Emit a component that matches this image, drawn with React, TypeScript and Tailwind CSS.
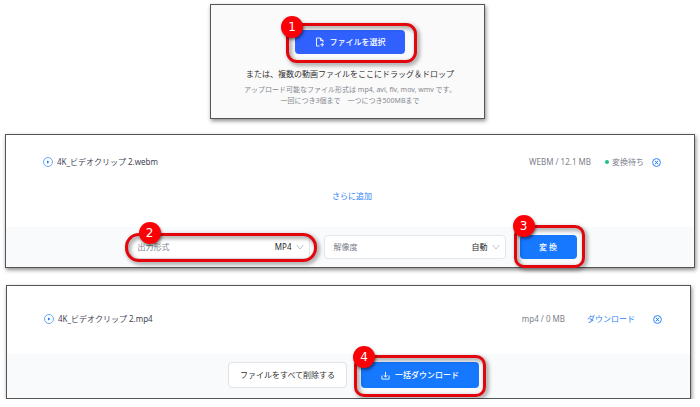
import { useState } from "react";
import type { ReactNode } from "react";

const PANEL =
    "flex flex-col border border-[#555555] shadow-[1px_2px_4px_rgba(0,0,0,0.45)]";
const PRIMARY =
    "flex items-center justify-center rounded-[4px] font-medium text-white";

type StepProps = {
    step: number;
    ring: string;
    badge: string;
    className?: string;
    children: ReactNode;
};

// Red outline with a numbered badge, laid over the control it points at
function Step({ step, ring, badge, className = "", children }: StepProps) {
    return (
        <div className={`relative flex ${className}`}>
            {children}
            <span
                className={`pointer-events-none absolute border-[3px] border-[#e3060c] drop-shadow-[2px_2px_2px_rgba(0,0,0,0.5)] ${ring}`}
            />
            <span
                className={`pointer-events-none absolute flex size-[22px] items-center justify-center rounded-full bg-[#fb0007] font-[Verdana,'DejaVu_Sans',sans-serif] text-[12px] leading-none text-white shadow-[1px_2px_3px_rgba(0,0,0,0.5)] ${badge}`}
            >
                {step}
            </span>
        </div>
    );
}

function PlayIcon() {
    return (
        <svg viewBox="0 0 20 20" className="size-[10px] shrink-0" fill="none" aria-hidden="true">
            <circle cx="10" cy="10" r="9" stroke="#4596f7" strokeWidth="1.6" />
            <path d="M8 6.8 13 10l-5 3.2z" fill="#1677ff" />
        </svg>
    );
}

function CloseIcon() {
    return (
        <svg viewBox="0 0 20 20" className="size-[9px]" fill="none" stroke="#1677ff" aria-hidden="true">
            <circle cx="10" cy="10" r="8.7" strokeWidth="2" />
            <path d="m6.8 6.3 6.4 7.4M13.2 6.3l-6.4 7.4" strokeWidth="2.2" />
        </svg>
    );
}

function FileAddIcon() {
    return (
        <svg viewBox="0 0 20 20" className="size-[10px]" fill="none" stroke="currentColor" strokeWidth="1.8" aria-hidden="true">
            <path d="M9 18H3V2h8l5 5v4" />
            <path d="M11 2v5h5M14.500 12v7M11 15.500h7" />
        </svg>
    );
}

function DownloadIcon() {
    return (
        <svg viewBox="0 0 20 20" className="size-[9px]" fill="none" stroke="currentColor" strokeWidth="2" aria-hidden="true">
            <path d="M2 10v8h16v-8" />
            <path d="M10 2v11M6 9.500l4 4 4-4" />
        </svg>
    );
}

type FieldProps = {
    id: string;
    label: string;
    options: string[];
};

function SelectField({ id, label, options }: FieldProps) {
    const [value, setValue] = useState(options[0]);

    return (
        <div className="flex h-6 w-full items-center rounded-[4px] border border-[#e4e6ea] bg-white pr-[5px] pl-[9px]">
            <label htmlFor={id} className="text-[#7b808a]">
                {label}
            </label>
            <select
                id={id}
                value={value}
                onChange={(e) => setValue(e.target.value)}
                className="min-w-0 flex-1 appearance-none bg-transparent pr-1 text-[#26282c] outline-none [text-align-last:right]"
            >
                {options.map((option) => (
                    <option key={option}>{option}</option>
                ))}
            </select>
            <svg viewBox="0 0 12 12" className="size-2" fill="none" stroke="#b5b8be" strokeWidth="1.3" aria-hidden="true">
                <path d="m1 3 5 6 5-6" />
            </svg>
        </div>
    );
}

export default function App() {
    return (
        <main className="flex flex-col bg-white pt-1 font-['Noto_Sans','Noto_Sans_CJK_JP',sans-serif] text-[8px] leading-3 text-[#3f4454]">
            <section className={`${PANEL} -ml-[6px] h-[115px] w-[275px] items-center self-center bg-[#fafafa] pt-[25px] pl-[6px]`}>
                <Step
                    step={1}
                    ring="-left-[9px] -right-[12px] -top-[7px] -bottom-[9px] rounded-[11px]"
                    badge="-left-[14px] -top-[14px]"
                >
                    <button type="button" className={`${PRIMARY} h-6 w-[110px] gap-[5px] bg-[#3061ff]`}>
                        <FileAddIcon />
                        ファイルを選択
                    </button>
                </Step>
                <p className="mt-[14px] text-[#333333]">
                    または、複数の動画ファイルをここにドラッグ＆ドロップ
                </p>
                <p className="mt-1 text-center text-[7px] leading-[11px] text-[#85888e]">
                    アップロード可能なファイル形式は mp4, avi, flv, mov, wmv です。
                    <br />
                    一回につき3個まで　一つにつき500MBまで
                </p>
            </section>

            <section className={`${PANEL} mx-[5px] mt-[15px] bg-white`}>
                <div className="mt-[21px] flex items-center pr-[33px] pl-[37px]">
                    <PlayIcon />
                    <span className="ml-1">4K_ビデオクリップ 2.webm</span>
                    <span className="ml-auto text-[#7d818b]">WEBM / 12.1 MB</span>
                    <span className="ml-[14px] size-1 rounded-full bg-[#20bf84]" />
                    <span className="ml-[3px] text-[#7d818b]">変換待ち</span>
                    <button type="button" aria-label="削除" className="ml-2">
                        <CloseIcon />
                    </button>
                </div>
                <a href="#add" className="mt-[22px] mb-[25px] ml-1 self-center text-[#2b82f6]">
                    さらに追加
                </a>
                <div className="flex justify-center gap-[14px] bg-[#f9fafc] pt-2 pr-2 pb-2 pl-3">
                    <Step
                        step={2}
                        ring="-left-[3px] -right-[7px] -top-[2px] -bottom-[3px] rounded-[14px]"
                        badge="left-[11px] -top-[13px]"
                        className="w-[182px]"
                    >
                        <SelectField id="format" label="出力形式" options={["MP4"]} />
                    </Step>
                    <div className="w-[182px]">
                        <SelectField id="resolution" label="解像度" options={["自動"]} />
                    </div>
                    <Step
                        step={3}
                        ring="-left-[6px] -right-[8px] -top-[10px] -bottom-[9px] rounded-[10px]"
                        badge="-left-[7px] -top-[20px]"
                    >
                        <button type="button" className={`${PRIMARY} h-6 w-[57px] bg-[#1677ff]`}>
                            変 換
                        </button>
                    </Step>
                </div>
            </section>

            <section className={`${PANEL} mt-[17px] mr-[9px] ml-[6px] bg-white`}>
                <div className="mt-[27px] mb-[29px] flex items-center pr-7 pl-[37px]">
                    <PlayIcon />
                    <span className="ml-1">4K_ビデオクリップ 2.mp4</span>
                    <span className="ml-auto text-[#7d818b]">mp4 / 0 MB</span>
                    <a href="#download" className="ml-[22px] text-[#2b82f6]">
                        ダウンロード
                    </a>
                    <button type="button" aria-label="削除" className="ml-[18px]">
                        <CloseIcon />
                    </button>
                </div>
                <div className="flex justify-center gap-[14px] bg-[#f9fafc] pt-2 pb-[10px] pl-[10px]">
                    <button
                        type="button"
                        className="flex h-[26px] w-[119px] items-center justify-center rounded-[4px] border border-[#e0e2e6] bg-white text-[#333333]"
                    >
                        ファイルをすべて削除する
                    </button>
                    <Step
                        step={4}
                        ring="-left-[7px] -right-[7px] -top-[7px] -bottom-[9px] rounded-[10px]"
                        badge="-left-[8px] -top-[16px]"
                    >
                        <button type="button" className={`${PRIMARY} h-[26px] w-[118px] gap-[5px] bg-[#1677ff]`}>
                            <DownloadIcon />
                            一括ダウンロード
                        </button>
                    </Step>
                </div>
            </section>
        </main>
    );
}
